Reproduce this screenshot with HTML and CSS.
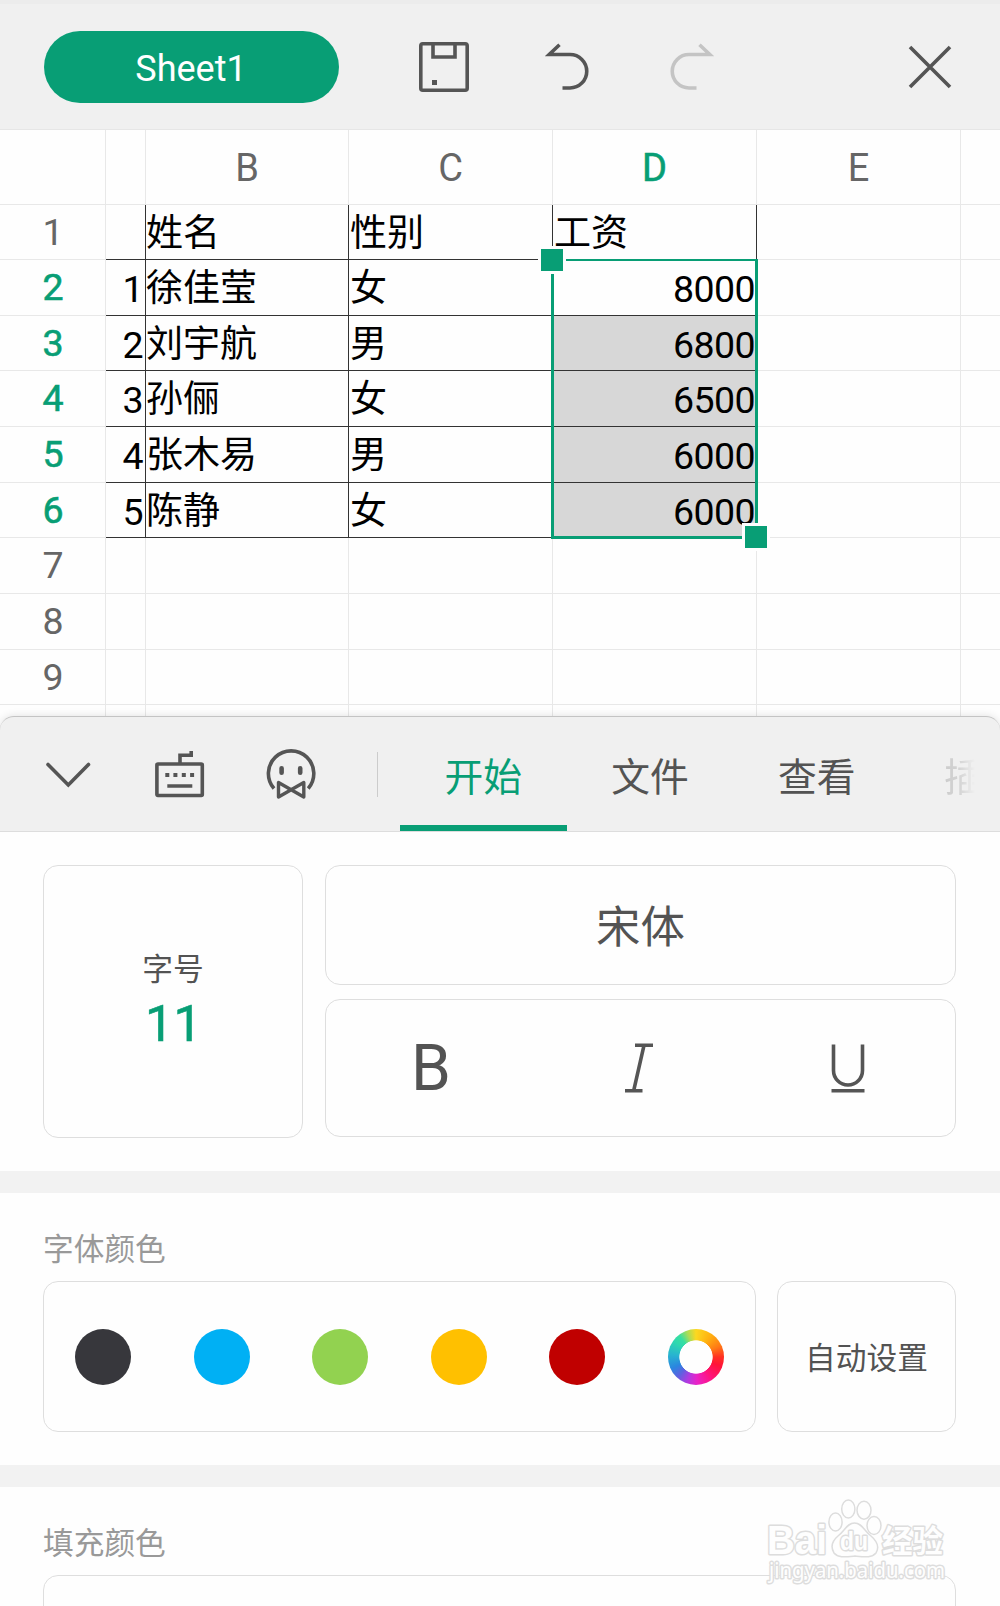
FILE: index.html
```html
<!DOCTYPE html>
<html lang="zh-CN">
<head>
<meta charset="utf-8">
<title>Sheet1</title>
<link rel="stylesheet" href="styles.css">
</head>
<body>
<div class="app">
  <header class="toolbar">
    <div class="sheet-pill">Sheet1</div>
    <svg class="icon save" width="50" height="50" viewBox="0 0 50 50"><rect x="1.8" y="1.8" width="46.4" height="46.4" rx="2"/><path d="M14 2V15H36V2"/><rect class="solid" x="13" y="38" width="5" height="5"/></svg>
    <svg class="icon undo" width="46" height="48" viewBox="0 0 46 48"><path d="M14.5 1.8L4.2 11.5H25a16.75 16.75 0 0 1 0 33.5H17.5"/></svg>
    <svg class="icon redo" width="46" height="48" viewBox="0 0 46 48"><path d="M31.500 1.800L41.800 11.500H21a16.750 16.750 0 0 0 0 33.500H28.500"/></svg>
    <svg class="icon close" width="44" height="44" viewBox="0 0 44 44"><path d="M2 2L42 42M42 2L2 42"/></svg>
  </header>

  <main class="sheet">
    <div class="row head"><i></i><i></i><i>B</i><i>C</i><i class="on">D</i><i>E</i><i></i></div>
    <div class="row r55 data top"><b>1</b><i></i><i>姓名</i><i>性别</i><i>工资</i><i></i><i></i></div>
    <div class="row r56 data"><b class="on">2</b><i class="num">1</i><i>徐佳莹</i><i>女</i><i class="num">8000</i><i></i><i></i></div>
    <div class="row r55 data sel"><b class="on">3</b><i class="num">2</i><i>刘宇航</i><i>男</i><i class="num">6800</i><i></i><i></i></div>
    <div class="row r56 data sel"><b class="on">4</b><i class="num">3</i><i>孙俪</i><i>女</i><i class="num">6500</i><i></i><i></i></div>
    <div class="row r56 data sel"><b class="on">5</b><i class="num">4</i><i>张木易</i><i>男</i><i class="num">6000</i><i></i><i></i></div>
    <div class="row r55 data sel"><b class="on">6</b><i class="num">5</i><i>陈静</i><i>女</i><i class="num">6000</i><i></i><i></i></div>
    <div class="row r56"><b>7</b><i></i><i></i><i></i><i></i><i></i><i></i></div>
    <div class="row r56"><b>8</b><i></i><i></i><i></i><i></i><i></i><i></i></div>
    <div class="row r55"><b>9</b><i></i><i></i><i></i><i></i><i></i><i></i></div>
    <div class="row r55"><b></b><i></i><i></i><i></i><i></i><i></i><i></i></div>
    <div class="selection"><span class="handle start"></span><span class="handle end"></span></div>
  </main>

  <section class="panel">
    <nav class="tabs">
      <svg class="icon chevron" width="46" height="28" viewBox="0 0 46 28"><path d="M3 4.500L23.300 25L43.500 4.500"/></svg>
      <svg class="icon keyboard" width="50" height="50" viewBox="0 0 50 50"><rect x="1.900" y="15" width="45.400" height="31.500" rx="1"/><path d="M25 15V6.300H36.200V2M12.300 37H37.300"/><path class="dots" d="M10.300 26h4M18.400 26h4M26.800 26h4M35.100 26h4"/></svg>
      <svg class="icon face" width="50" height="52" viewBox="0 0 50 52"><path d="M8 40.500A22.700 22.700 0 1 1 42.200 40.500"/><path class="eyes" d="M15.600 20.300v4.500M34.200 20.300v4.500"/><path class="bow" d="M12.500 34.500V49L37.800 34.500V49Z"/></svg>
      <span class="rule"></span>
      <a class="tab active">开始</a><a class="tab">文件</a><a class="tab">查看</a><a class="tab fade">插</a>
    </nav>

    <div class="group font-group">
      <div class="card size"><span class="caption">字号</span><span class="value">11</span></div>
      <div class="font-col">
        <div class="card family">宋体</div>
        <div class="card styles">
          <span class="bold">B</span>
          <svg class="icon" width="32" height="52" viewBox="0 0 32 52"><path d="M12 3.300H30M2 48.700H19.500M21 3.300L10.700 48.700"/></svg>
          <svg class="icon" width="36" height="52" viewBox="0 0 36 52"><path d="M3.500 2.500V28.500a14.500 14.500 0 0 0 29 0V2.500M1.500 48.700H34.500"/></svg>
        </div>
      </div>
    </div>

    <div class="group color-group">
      <h2>字体颜色</h2>
      <div class="color-row">
        <div class="card swatches">
          <span class="dot dark"></span><span class="dot blue"></span><span class="dot green"></span><span class="dot amber"></span><span class="dot red"></span><span class="dot wheel"></span>
        </div>
        <div class="card auto">自动设置</div>
      </div>
    </div>

    <div class="group fill-group">
      <h2>填充颜色</h2>
      <div class="card fill"></div>
    </div>
  </section>

  <svg class="watermark" width="190" height="96" viewBox="0 0 190 96">
    <g class="paw">
      <ellipse cx="71.500" cy="32" rx="6.600" ry="9"/><ellipse cx="84.300" cy="19" rx="6.600" ry="9"/><ellipse cx="100" cy="20.200" rx="7" ry="9"/><ellipse cx="110" cy="35.500" rx="7" ry="9"/>
      <path d="M90.500 33C98 33 100 41 107 46C114 52 115 58 112 63C108 68 101 67 91 66C81 67 74 68 70 63C67 58 67 52 74 46C81 41 83 33 90.500 33Z"/>
    </g>
    <text class="brand" x="3" y="64" textLength="60" lengthAdjust="spacingAndGlyphs">Bai</text>
    <text class="du" x="76" y="60" textLength="28" lengthAdjust="spacingAndGlyphs">du</text>
    <text class="cn" x="118" y="62" textLength="61" lengthAdjust="spacingAndGlyphs">经验</text>
    <text class="url" x="5" y="88" textLength="176" lengthAdjust="spacingAndGlyphs">jingyan.baidu.com</text>
  </svg>
</div>
</body>
</html>
```
FILE: styles.css
```css
* { box-sizing: border-box; }
body { margin: 0; font-family: Roboto, "Noto Sans CJK SC", sans-serif; background: #fff; }
.app { position: relative; width: 1000px; height: 1606px; overflow: hidden; background: #fefefe; color: #535353; }

.icon { fill: none; stroke: #555; stroke-width: 3.6; flex: none; display: block; }
.icon .solid { fill: #555; stroke: none; }

.toolbar { display: flex; align-items: center; height: 130px; padding: 6px 0 1px 43.500px; background: #f0f0f0; border-bottom: 1px solid #e6e6e6; box-shadow: inset 0 4px 0 #ececec; }
.sheet-pill { width: 295px; height: 72px; border-radius: 37px; background: #089e75; color: #fff; font-size: 36px; line-height: 76px; text-align: center; }
.save { margin-left: 80px; }
.undo { margin-left: 76px; }
.redo { margin-left: 77.500px; opacity: .28; }
.close { margin-left: 193.500px; }

.sheet { position: relative; height: 586px; overflow: hidden; background: #fefefe; }
.row { display: grid; grid-template-columns: 106px 40px 203px 204px 204px 204px 39px; grid-template-rows: 100%; height: 56px; }
.row > * { display: block; border-right: 1px solid #e8e8e8; border-bottom: 1px solid #e8e8e8; font-style: normal; font-weight: 400; font-size: 37.500px; line-height: 55px; white-space: nowrap; }
.row > :last-child { border-right: 0; }
.row b { text-align: center; color: #666; padding-left: 1px; }
.row .on { color: #089e75; -webkit-text-stroke: .6px #089e75; }
.row.r55 { height: 55px; }
.row.head { height: 75px; }
.head i { text-align: center; color: #666; line-height: 76px; font-size: 38px; }
.data i { color: #000; font-size: 37px; line-height: 58px; padding-left: 1px; }
.data i:nth-child(3) { padding-left: 0; }
.data i:nth-child(-n+5) { border-color: #333; }
.data i.num { text-align: right; line-height: 58px; padding: 0 1px 0 0; font-size: 37.500px; letter-spacing: -.6px; }
.data i.num:nth-child(2) { padding-right: 2px; }
.sel i:nth-child(5) { background: #d7d7d7; }
.selection { position: absolute; left: 551px; top: 129px; width: 207px; height: 280px; border: 3px solid #089e75; border-top-width: 2px; }
.handle { position: absolute; width: 28px; height: 28px; border: 3px solid #fefefe; background: #089e75; }
.start { left: -16px; top: -15px; }
.end { right: -15px; bottom: -15px; }

.panel { position: relative; height: 890px; background: #fefefe; border-radius: 14px 14px 0 0; box-shadow: 0 0 8px rgba(0,0,0,.12); }
.tabs { display: flex; align-items: center; height: 116px; padding-left: 45px; background: #f0f0f0; border-top: 1px solid #c4c4c4; border-bottom: 1px solid #ddd; border-radius: 14px 14px 0 0; overflow: hidden; }
.chevron { stroke-linecap: round; }
.keyboard { margin-left: 63.500px; }
.keyboard .dots { stroke-width: 4; }
.face { margin-left: 61.500px; }
.face .eyes { stroke-width: 4.6; stroke-linecap: round; }
.face .bow { stroke-linejoin: round; stroke-width: 3.4; }
.rule { width: 1px; height: 45px; margin: 0 22px 0 61px; background: #ccc; }
.tab { flex: none; width: 166.700px; height: 114px; font-size: 38.800px; line-height: 122px; text-align: center; border-bottom: 6px solid transparent; }
.tab.active { color: #089e75; border-color: #089e75; }
.tab.fade { width: 99px; padding-left: 44px; text-align: left; overflow: hidden; color: #777; -webkit-mask-image: linear-gradient(90deg, rgba(0,0,0,.3) 44px, rgba(0,0,0,.22) 60px, transparent 75px); mask-image: linear-gradient(90deg, rgba(0,0,0,.3) 44px, rgba(0,0,0,.22) 60px, transparent 75px); }

.card { border: 1px solid #dedede; border-radius: 15px; background: #fefefe; }
.font-group { display: flex; gap: 22px; height: 339px; padding: 33px 44px 34px 43px; }
.size { width: 260px; height: 273px; padding: 84px 0 0; display: flex; flex-direction: column; align-items: center; }
.size .caption { font-size: 30.800px; line-height: 40px; }
.size .value { font-size: 50.500px; line-height: 68px; color: #089e75; -webkit-text-stroke: .6px #089e75; padding-left: 1px; }
.font-col { width: 631px; display: flex; flex-direction: column; gap: 14px; }
.family { height: 120px; font-size: 44.400px; line-height: 125px; text-align: center; }
.styles { height: 139px; display: flex; align-items: center; justify-content: space-between; padding: 0 89px 0 85px; }
.bold { width: 37px; font-size: 64px; line-height: 64px; padding-top: 2px; }

.group + .group { border-top: 22px solid #f2f2f2; }
.group h2 { margin: 0; padding-top: 37px; height: 88px; font-size: 30.700px; line-height: 40px; font-weight: 400; color: #999; }
.color-group { height: 294px; padding: 0 44px 0 43px; }
.color-row { display: flex; gap: 21px; }
.swatches { width: 713px; height: 151px; display: flex; align-items: center; justify-content: space-between; padding: 0 31px 0 31px; }
.dot { width: 56px; height: 56px; border-radius: 50%; }
.dark { background: #37373c; }
.blue { background: #00b0f4; }
.green { background: #92d250; }
.amber { background: #ffc000; }
.red { background: #c00000; }
.wheel { background: radial-gradient(circle, #fefefe 0 16.300px, transparent 17px), conic-gradient(#fcd820, #ffb010 35deg, #ff7a15 65deg, #ff3022 90deg, #ff1438 110deg, #ff1480 145deg, #e822c8 178deg, #b03ae0 200deg, #6060e0 222deg, #2a86e0 245deg, #28b4d0 275deg, #2ed8b0 305deg, #38dfa0 322deg, #a8dc58 340deg, #fcd820); }
.auto { flex: 1; height: 151px; font-size: 30.700px; line-height: 154px; text-align: center; }
.fill-group { padding: 0 44px 0 43px; }
.fill { height: 120px; }

.watermark { position: absolute; left: 764px; top: 1490px; overflow: visible; }
.watermark * { fill: #fefefe; stroke: #ddd; stroke-width: 1.500px; stroke-linejoin: round; }
.watermark text { paint-order: stroke; stroke-width: 3px; }
.brand { font: 700 40px "Liberation Sans", sans-serif; }
.du { font: 700 25px "Liberation Sans", sans-serif; }
.cn { font: 700 31px "Noto Sans CJK SC", sans-serif; }
.url { font: 400 21px "Noto Sans", sans-serif; }
```
